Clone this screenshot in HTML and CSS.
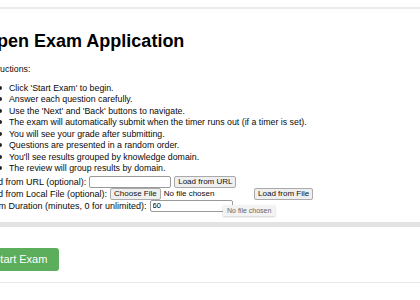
FILE: index.html
```html
<!DOCTYPE html>
<html lang="en">
<head>
    <meta charset="UTF-8">
    <meta name="viewport" content="width=device-width, initial-scale=1.0">
    <title>Open Exam Application</title>
    <link rel="stylesheet" href="styles.css">
</head>
<body>
    <div class="top-rule"></div>

    <div class="container">
        <h1 class="title">Open Exam Application</h1>

        <p class="intro">Instructions:</p>
        <ul class="steps">
            <li>Click 'Start Exam' to begin.</li>
            <li>Answer each question carefully.</li>
            <li>Use the 'Next' and 'Back' buttons to navigate.</li>
            <li>The exam will automatically submit when the timer runs out (if a timer is set).</li>
            <li>You will see your grade after submitting.</li>
            <li>Questions are presented in a random order.</li>
            <li>You'll see results grouped by knowledge domain.</li>
            <li>The review will group results by domain.</li>
        </ul>

        <div class="field-row">
            <label for="examUrl">Load from URL (optional):</label>
            <input type="text" id="examUrl" class="url-input">
            <button type="button" class="btn-small">Load from URL</button>
        </div>
        <div class="field-row">
            <label>Load from Local File (optional):</label>
            <span class="file-pick">
                <button type="button" class="btn-small">Choose File</button>
                <span class="file-name">No file chosen</span>
            </span>
            <button type="button" class="btn-small">Load from File</button>
        </div>
        <div class="field-row tip-anchor">
            <label for="duration">Exam Duration (minutes, 0 for unlimited):</label>
            <input type="text" id="duration" class="duration-input" value="60">
            <span class="tooltip">No file chosen</span>
        </div>
    </div>

    <div class="divider"></div>

    <div class="container actions">
        <button type="button" class="btn-start">Start Exam</button>
    </div>

    <div class="bottom-rule"></div>
</body>
</html>
```

FILE: styles.css
```css
* {
    margin: 0;
    padding: 0;
    box-sizing: border-box;
    font-family: "Liberation Sans", Arial, sans-serif;
}

body {
    background-color: #fff;
    color: #0a0a0a;
    overflow: hidden;
    padding-top: 7px;
}

.top-rule {
    height: 2px;
    background-color: #ebebeb;
}

.container {
    margin-left: -17px;
}

.title {
    font-size: 18px;
    font-weight: bold;
    color: #000;
    margin-top: 22px;
    margin-bottom: 12px;
}

.intro {
    font-size: 8.8px;
    line-height: 11.5px;
    margin-bottom: 7px;
}

.steps {
    font-size: 8.8px;
    line-height: 11.5px;
    padding-left: 26px;
    margin-bottom: 1px;
    list-style: none;
}

.steps li::before {
    content: "";
    display: inline-block;
    width: 4px;
    height: 4px;
    border-radius: 50%;
    background-color: #222;
    margin-left: -11.5px;
    margin-right: 7.5px;
    vertical-align: 1px;
}

.field-row {
    display: flex;
    align-items: center;
    height: 12px;
    font-size: 9px;
}

.field-row label {
    margin-right: 3px;
    white-space: nowrap;
}

.url-input,
.duration-input {
    height: 12px;
    border: 1px solid #999;
    border-radius: 2px;
    font-size: 7.5px;
    padding: 0 2px;
}

.url-input {
    width: 82px;
    margin-right: 3px;
}

.duration-input {
    width: 83px;
}

.btn-small {
    height: 12px;
    padding: 0 3px;
    font-size: 8px;
    background-color: #efefef;
    border: 1px solid #aaa;
    border-radius: 2px;
    color: #111;
    white-space: nowrap;
}

.file-pick {
    display: flex;
    align-items: center;
    width: 141px;
    margin-right: 3px;
}

.file-name {
    margin-left: 3px;
    font-size: 8px;
    white-space: nowrap;
}

.tip-anchor {
    position: relative;
}

.tooltip {
    position: absolute;
    left: 240px;
    top: 5px;
    font-size: 7px;
    color: #666;
    background-color: #f3f3f3;
    padding: 2px 4px;
    white-space: nowrap;
    box-shadow: 0 1px 2px rgba(0,0,0,0.2);
}

.divider {
    height: 5px;
    background-color: #e3e3e3;
    margin-top: 10px;
}

.actions {
    margin-left: -19px;
    padding: 21px 0 11px;
}

.btn-start {
    background-color: #5cad5c;
    color: #fff;
    border: none;
    border-radius: 3px;
    font-size: 11px;
    padding: 0 12px;
    height: 23px;
    white-space: nowrap;
}

.bottom-rule {
    height: 1px;
    background-color: #ebebeb;
}
```
